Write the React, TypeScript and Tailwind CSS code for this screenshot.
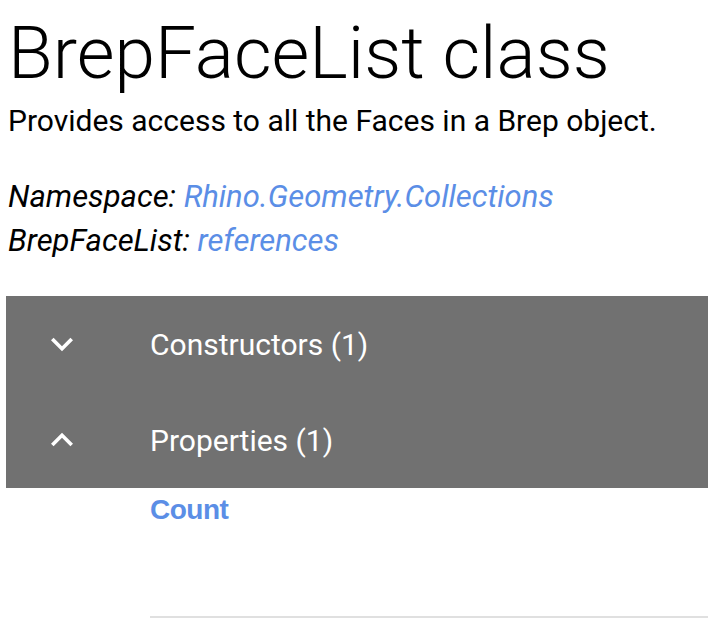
import { useState } from 'react';

const sections = [
  { name: 'Constructors', count: 1, open: false },
  { name: 'Properties', count: 1, open: true },
];

function Chevron({ up }: { up: boolean }) {
  return (
    <svg className="w-[44px] h-[44px] text-white" viewBox="0 0 24 24" fill="currentColor">
      {up ? (
        <path d="M7.41 15.41L12 10.83l4.59 4.58L18 14l-6-6-6 6z" />
      ) : (
        <path d="M16.59 8.59L12 13.17 7.41 8.59 6 10l6 6 6-6z" />
      )}
    </svg>
  );
}

export default function App() {
  const [open, setOpen] = useState(sections.map((s) => s.open));

  return (
    <div className="min-h-[634px] bg-white font-['Roboto',sans-serif] text-black">
      {/* Header */}
      <div className="px-2">
        <h1 className="text-[73px] font-light leading-[72px] pt-[17px]">BrepFaceList class</h1>
        <p className="text-[30px] leading-[36px] mt-[14px]">Provides access to all the Faces in a Brep object.</p>
        <div className="mt-[36px] text-[31px] italic leading-[44px]">
          <div>
            Namespace: <a className="text-[#5b8ee6]">Rhino.Geometry.Collections</a>
          </div>
          <div>
            BrepFaceList: <a className="text-[#5b8ee6]">references</a>
          </div>
        </div>
      </div>

      {/* Sections */}
      <div className="ml-[6px] mt-[33px] bg-[#717171]">
        {sections.map((s, i) => (
          <button
            key={s.name}
            className="flex items-center w-full h-[96px] text-left text-white"
            onClick={() => setOpen(open.map((o, j) => (j === i ? !o : o)))}
          >
            <div className="w-[144px] pl-[34px] flex items-center">
              <Chevron up={open[i]} />
            </div>
            <span className="text-[30px]">
              {s.name} ({s.count})
            </span>
          </button>
        ))}
      </div>

      {/* Properties list */}
      <div className="ml-[150px]">
        <a className="block pt-[6px] font-['Liberation_Sans',sans-serif] font-bold text-[28px] leading-[32px] text-[#5b8ee6] tracking-[-0.5px]">
          Count
        </a>
        <div className="mt-[90px] h-[2px] bg-[#e0e0e0]" />
      </div>
    </div>
  );
}
